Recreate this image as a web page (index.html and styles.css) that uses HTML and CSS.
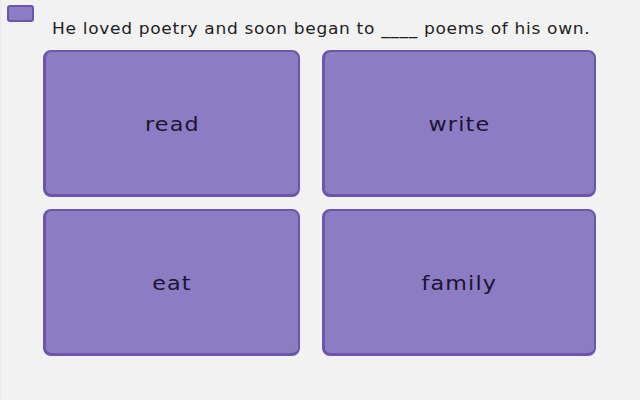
FILE: index.html
```html
<!DOCTYPE html>
<html>
<head>
<meta charset="utf-8">
<link rel="stylesheet" href="styles.css">
</head>
<body>
<div class="page">
  <div class="top">
    <div class="badge"></div>
  </div>
  <p class="question"><span class="wide">He loved poetry and soon began to ____ poems of his own.</span></p>
  <div class="grid">
    <div class="card"><span class="label">read</span></div>
    <div class="card"><span class="label">write</span></div>
    <div class="card"><span class="label">eat</span></div>
    <div class="card"><span class="label">family</span></div>
  </div>
</div>
</body>
</html>
```
FILE: styles.css
```css
html, body {
  margin: 0;
  padding: 0;
}
body {
  width: 640px;
  height: 400px;
  background: #f3f2f3;
  font-family: "DejaVu Sans", Verdana, sans-serif;
  overflow: hidden;
}
.page {
  height: 400px;
  box-sizing: border-box;
  border-left: 1px solid #f1e6ee;
}
.top {
  padding: 5px 0 0 6px;
  height: 17px;
}
.badge {
  width: 23px;
  height: 13px;
  background: #8b7cc3;
  border: 2px solid #6b56ad;
  border-radius: 3px;
}
.question {
  margin: 0;
  height: 28px;
  padding-top: 1px;
  box-sizing: border-box;
  line-height: 12px;
  font-size: 15px;
  color: #1e1e1e;
  text-align: center;
  padding-left: 2px;
}
.wide {
  display: inline-block;
  letter-spacing: 0.6px;
  transform: scaleX(1.135);
}
.grid {
  display: grid;
  grid-template-columns: 257px 274px;
  grid-template-rows: 147px 147px;
  column-gap: 22px;
  row-gap: 12px;
  padding-left: 42px;
}
.card {
  box-sizing: border-box;
  background: #8b7cc3;
  border: 2px solid #6b56ad;
  border-left-width: 3px;
  border-bottom-width: 3px;
  border-radius: 8px;
  display: flex;
  align-items: center;
  justify-content: center;
  font-size: 19px;
  padding-top: 2px;
  color: #1a1530;
}
.label {
  display: inline-block;
  letter-spacing: 1px;
  transform: scaleX(1.17);
}
```
